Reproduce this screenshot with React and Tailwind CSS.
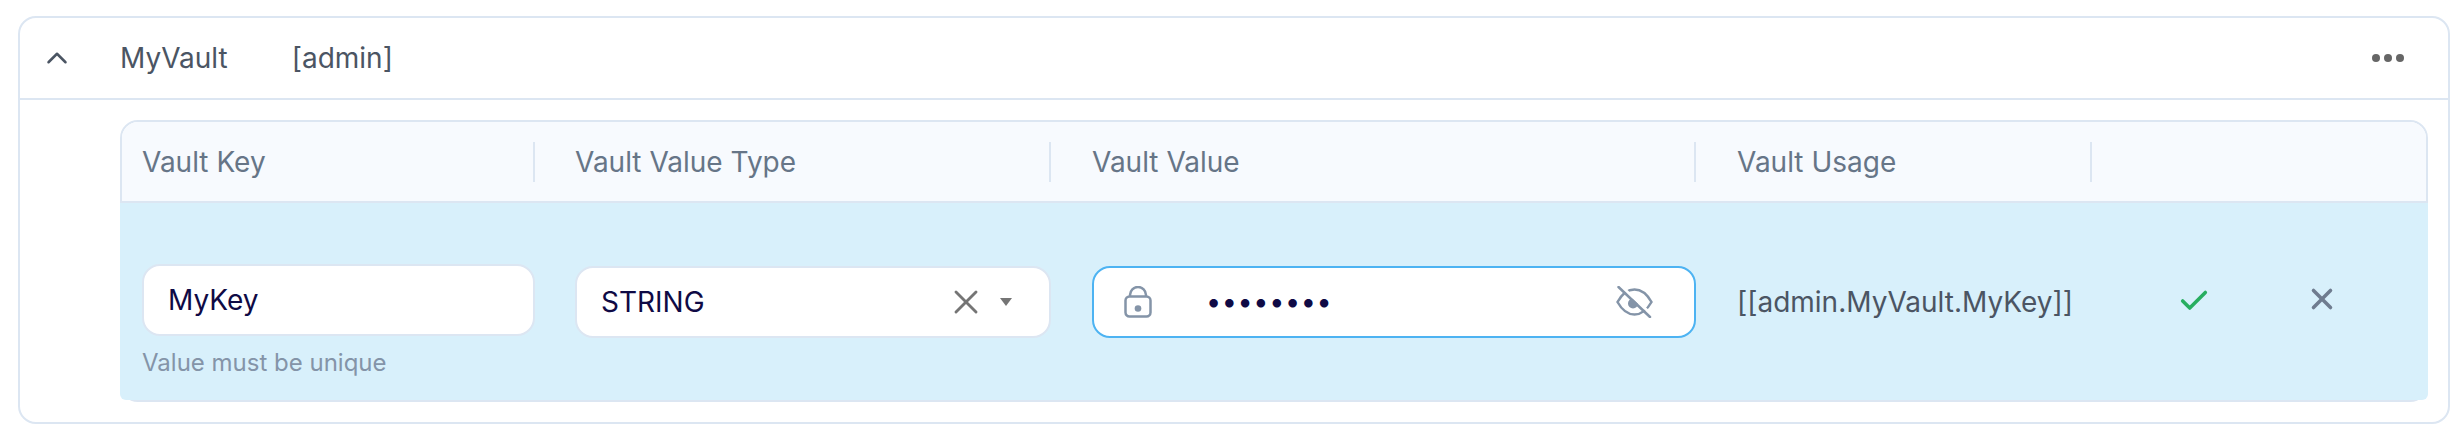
import React from "react";
import { ChevronUp, Check, X } from "lucide-react";

function HeadCell({ className, children }) {
  return (
    <div className={`flex items-center h-10 shrink-0 border-r-2 border-[#dce6f2] ${className}`}>
      {children}
    </div>
  );
}

function LockIcon() {
  return (
    <svg width="28" height="32" viewBox="0 0 28 32" fill="none" stroke="#8494a8" strokeWidth="2.5" className="shrink-0">
      <rect x="1.5" y="10.5" width="25" height="20" rx="4" />
      <path d="M6 11V9a8 8 0 0 1 16 0v2" />
      <circle cx="14" cy="22.5" r="3.3" fill="#8494a8" stroke="none" />
    </svg>
  );
}

function EyeOffIcon() {
  return (
    <svg width="37" height="32" viewBox="0 0 37 32" fill="none" stroke="#8494a8" strokeWidth="2.5" strokeLinecap="round" className="ml-auto mr-[41px] shrink-0">
      <path d="M1.5 16C6 8 12 3.5 18.5 3.5S31 8 35.5 16C31 24 25 28.5 18.5 28.5S6 24 1.5 16Z" />
      <circle cx="17" cy="17.5" r="5" fill="#8494a8" stroke="none" />
      <path d="M5 0L36 29" stroke="#ffffff" strokeWidth="3" />
      <path d="M2.5 1L34 31" />
    </svg>
  );
}

function App() {
  return (
    <div className="w-[2464px] h-[438px] bg-white pt-4 pl-[18px] font-['Inter',sans-serif]">
      <div className="w-[2432px] h-[408px] border-2 border-[#dce6f2] rounded-[18px] bg-white">
        <div className="h-[82px] flex items-center border-b-2 border-[#dce6f2]">
          <ChevronUp className="ml-5 w-[34px] h-[34px] text-[#4b5563]" strokeWidth={1.75} />
          <span className="ml-[46px] text-[28px] text-[#4b5563]">MyVault</span>
          <span className="ml-[64px] text-[28px] text-[#4b5563]">[admin]</span>
          <div className="ml-auto mr-[44px] flex gap-1">
            <span className="w-2 h-2 rounded-full bg-[#666666]"></span>
            <span className="w-2 h-2 rounded-full bg-[#666666]"></span>
            <span className="w-2 h-2 rounded-full bg-[#666666]"></span>
          </div>
        </div>
        <div className="pl-[100px] pr-5 pt-5">
          <div className="border-2 border-[#dce6f2] rounded-[18px]">
            <div className="h-[81px] flex items-center pl-5 gap-[41px] bg-[#f7fafe] rounded-t-[16px] border-b-2 border-[#dce6f2] text-[28px] text-[#667587]">
              <HeadCell className="w-[393px] -mr-px">Vault Key</HeadCell>
              <HeadCell className="w-[476px]">Vault Value Type</HeadCell>
              <HeadCell className="w-[604px]">Vault Value</HeadCell>
              <HeadCell className="w-[355px]">Vault Usage</HeadCell>
            </div>
            <div className="h-[197px] -mx-0.5 flex items-start pl-[22px] gap-[41px] bg-[#d8f0fb] rounded-b-[6px] pt-[61px]">
              <div className="w-[393px] shrink-0 -mr-px">
                <div className="h-[72px] flex items-center pl-6 bg-white border-2 border-[#dce6f2] rounded-[18px] text-[28px] text-[#0f0a45]">
                  MyKey
                </div>
                <div className="mt-[9px] text-[24px] text-[#8494a8]">Value must be unique</div>
              </div>
              <div className="w-[476px] shrink-0 h-[72px] mt-0.5 flex items-center pl-6 bg-white border-2 border-[#dce6f2] rounded-[18px] text-[28px] text-[#0f0a45]">
                STRING
                <X className="ml-auto w-10 h-10 text-[#757575]" strokeWidth={1.75} />
                <span className="ml-[14px] mr-[37px] w-0 h-0 border-x-[6px] border-t-8 border-x-transparent border-t-[#757575]"></span>
              </div>
              <div className="w-[604px] shrink-0 h-[72px] mt-0.5 flex items-center pl-[30px] bg-white border-2 border-[#4db3f2] rounded-[18px] text-[#0f0a45]">
                <LockIcon />
                <span className="ml-[54px] text-[27px] tracking-[0.6px]">••••••••</span>
                <EyeOffIcon />
              </div>
              <div className="w-[355px] shrink-0 h-[72px] mt-0.5 flex items-center text-[28px] text-[#4b5563]">
                [[admin.MyVault.MyKey]]
              </div>
              <div className="flex items-center h-[72px] mt-0.5 gap-[94px] pl-[44px]">
                <Check className="w-[34px] h-[34px] text-[#27ae60] -mt-[3px]" strokeWidth={2.5} />
                <X className="w-[34px] h-[34px] text-[#6f7c8f] -mt-[7px]" strokeWidth={2.5} />
              </div>
            </div>
          </div>
        </div>
      </div>
    </div>
  );
}

export default App;
